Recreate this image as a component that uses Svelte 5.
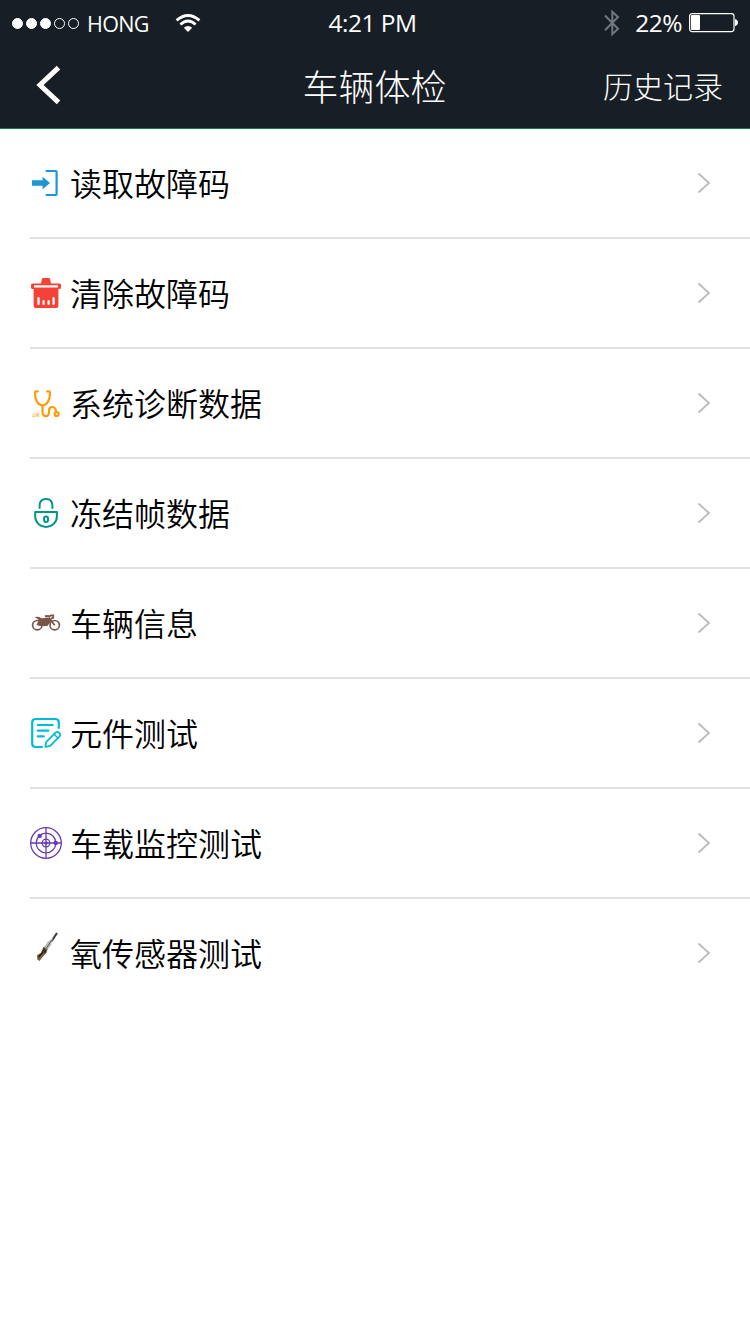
<script lang="ts">
  interface MenuItem {
    icon: string;
    label: string;
  }

  const signal = [true, true, true, false, false];

  const items: MenuItem[] = [
    { icon: 'read', label: '读取故障码' },
    { icon: 'clear', label: '清除故障码' },
    { icon: 'diagnose', label: '系统诊断数据' },
    { icon: 'freeze', label: '冻结帧数据' },
    { icon: 'vehicle', label: '车辆信息' },
    { icon: 'component', label: '元件测试' },
    { icon: 'monitor', label: '车载监控测试' },
    { icon: 'oxygen', label: '氧传感器测试' }
  ];
</script>

<div class="screen">
  <header>
    <div class="status-bar">
      <div class="carrier">
        <div class="signal">
          {#each signal as on}
            <span class="dot" class:on></span>
          {/each}
        </div>
        <span class="carrier-name">HONG</span>
        <svg class="wifi" width="26" height="20" viewBox="0 0 26 20">
          <g fill="none" stroke="#fff" stroke-width="2.8">
            <path d="M1.6 7.4Q13 -2.4 24.4 7.4" />
            <path d="M5.4 11.5Q13 4.6 20.6 11.5" />
          </g>
          <path d="M8.8 14.7Q13 11.2 17.2 14.7L13 19Z" fill="#fff" />
        </svg>
      </div>
      <span class="time">4:21 PM</span>
      <div class="power">
        <svg class="bluetooth" width="16" height="28" viewBox="0 0 16 28">
          <path d="M1 6.5L14 19.8L8.3 25.2V2.8L14 8L1 21.2" fill="none" stroke="#74767e" stroke-width="2" />
        </svg>
        <span class="percent">22%</span>
        <svg class="battery" width="50" height="20" viewBox="0 0 50 20">
          <rect x="0.6" y="0.6" width="44.4" height="18" rx="2.5" fill="none" stroke="#fff" stroke-width="1.2" />
          <rect x="2" y="2" width="9" height="15" rx="1" fill="#fff" />
          <path d="M46 6Q49 7 49 9.6T46 13.2Z" fill="#fff" />
        </svg>
      </div>
    </div>
    <nav>
      <button class="back" aria-label="返回">
        <svg width="26" height="40" viewBox="0 0 26 40">
          <path d="M22.5 2.7L4 20L22.5 37.3" fill="none" stroke="#fff" stroke-width="5" />
        </svg>
      </button>
      <h1>车辆体检</h1>
      <button class="history">历史记录</button>
    </nav>
  </header>

  <ul class="menu">
    {#each items as item}
      <li>
        <svg class="icon" width="32" height="32" viewBox="0 0 32 32">
          {#if item.icon === 'read'}
            <path d="M2 13.2H12.6V9.8L20 16L12.6 22.2V18.8H2Z" fill="#1c96d8" />
            <path d="M15.7 4H25.6Q26.6 4 26.6 4.8V27.2Q26.6 28 25.6 28H15.7" fill="none" stroke="#1c96d8" stroke-width="2.2" />
          {:else if item.icon === 'clear'}
            <path d="M11 6.5L11.8 2.4Q12 1 13.4 1H18.6Q20 1 20.2 2.4L21 6.5H29.5Q31 6.5 31 8V10.5Q31 12 29.5 12H28.4V29Q28.4 31 26.4 31H5.6Q3.6 31 3.6 29V12H2.5Q1 12 1 10.5V8Q1 6.5 2.5 6.5Z" fill="#f44336" />
            <path d="M4 9.4H28" stroke="#fff" stroke-width="2.2" />
            <path d="M8.5 21V27M13.6 24V27M18.6 24V27M23.6 21V27" stroke="#fff" stroke-width="2.2" stroke-linecap="round" />
          {:else if item.icon === 'diagnose'}
            <g fill="none" stroke="#ff9c0a" stroke-width="2.2" stroke-linecap="round">
              <path d="M7.8 4.4H6.2Q5 4.4 5 6C5 11 7 18.3 12.5 18.3S20 11 20 6Q20 4.4 18.8 4.4H17.2" />
              <path d="M12.5 18.5V24.5Q12.5 29.2 15.7 29.2Q19 29.2 19 25V23.5Q19 20 22.3 20T26 24.5" />
              <circle cx="26.6" cy="27" r="2" />
            </g>
            <text x="2" y="29.8" font-size="4" fill="#ff9c0a">诊断</text>
          {:else if item.icon === 'freeze'}
            <g fill="none" stroke="#009688" stroke-width="2">
              <path d="M9.6 11.8V8.5Q9.6 1.9 16 1.9T22.4 8.5V11.8" />
              <path d="M5.2 14.9H26.9V19.5A10.85 10.4 0 0 1 5.2 19.5Z" stroke-linejoin="round" />
              <rect x="14.1" y="19.4" width="3.9" height="5.6" rx="1.9" />
            </g>
          {:else if item.icon === 'vehicle'}
            <g fill="none" stroke="#795548" stroke-width="1.7">
              <circle cx="7.3" cy="18.2" r="4.7" />
              <circle cx="24.7" cy="18.2" r="4.7" />
              <path d="M24.7 18.2L19 10.5M15 9L18.5 9.5M7.3 18.2L10 13" />
            </g>
            <path d="M4.6 10.1Q8.5 9.2 11 11Q14 11.6 16 10.6L19.6 11L21 14.2L17.4 19H9.3L7.6 17.8L9.8 14.2L7.5 11.7Z" fill="#795548" />
            <path d="M15.2 9.2H19.5L21.2 8.4H23.2V10.8L21 11.6" fill="none" stroke="#795548" stroke-width="1.8" />
          {:else if item.icon === 'component'}
            <g fill="none" stroke="#00bcd4" stroke-width="2.2" stroke-linecap="round" stroke-linejoin="round">
              <path d="M28.8 11V5.5Q28.8 2 25.3 2H5.7Q2.2 2 2.2 5.5V26.5Q2.2 30 5.7 30H12" />
              <path d="M7.8 8H22.7M7.8 13.7H18.3M7.8 19.4H13.8" />
              <path d="M15.4 29.8L16.1 25.2L25.5 15.6Q27 14.1 29 15.7Q31.2 17.7 29.4 19.6L20.2 28.8Z" stroke-width="1.8" />
              <path d="M24.2 17.3L27.9 21" stroke-width="1.6" />
            </g>
          {:else if item.icon === 'monitor'}
            <g fill="none" stroke="#673ab7" stroke-width="1.3">
              <circle cx="16" cy="16" r="15.3" />
              <circle cx="16" cy="16" r="9.8" />
              <circle cx="16" cy="16" r="3.8" />
              <circle cx="16" cy="16" r="1" />
              <path d="M0.5 16H31.5M16 0.5V31.5" />
            </g>
            <circle cx="9.7" cy="8.9" r="2.2" fill="#673ab7" />
            <circle cx="25.8" cy="16" r="2.2" fill="#673ab7" />
          {:else}
            <path d="M27 -4L21 5" stroke="#34343a" stroke-width="2" />
            <path d="M22.8 1.2L18 4.6L13.4 11L16.5 14L21 8.2Z" fill="#bcbcb4" />
            <path d="M21.7 3.2L16.5 11" stroke="#5c5b58" stroke-width="1" />
            <path d="M13.4 9.8L17.6 12L16.4 15.7L11.8 21L9.5 24L7.3 22.5L7 18.2L11.3 15.4Z" fill="#76613e" />
            <path d="M14.6 11.5L12.3 15.8L8.5 20.2M16 13L14.3 16" fill="none" stroke="#292519" stroke-width="1.5" />
          {/if}
        </svg>
        <span class="label">{item.label}</span>
        <svg class="chevron" width="14" height="22" viewBox="0 0 14 22">
          <path d="M1.5 1.5L12 11L1.5 20.5" fill="none" stroke="#bbb" stroke-width="1.8" />
        </svg>
      </li>
    {/each}
  </ul>
</div>

<style>
  :global(body) {
    background: #fff;
  }

  .screen {
    width: 750px;
    height: 1334px;
    overflow: hidden;
    background: #fff;
    font-family: 'Noto Sans CJK SC', sans-serif;
  }

  header {
    box-sizing: border-box;
    height: 129px;
    border-bottom: 1px solid #0a8043;
    background: #171e25;
    color: #fff;
  }

  .status-bar,
  nav {
    display: grid;
    grid-template-columns: 1fr auto 1fr;
    align-items: center;
  }

  .status-bar {
    height: 46px;
    padding: 0 12px;
    font-family: 'Open Sans', 'Noto Sans', sans-serif;
    font-weight: 400;
  }

  .carrier,
  .power,
  .signal {
    display: flex;
    align-items: center;
  }

  .signal {
    gap: 3px;
  }

  .dot {
    box-sizing: border-box;
    width: 11px;
    height: 11px;
    border: 1px solid #fff;
    border-radius: 50%;
  }

  .dot.on {
    background: #fff;
  }

  .carrier-name {
    width: 62px;
    margin-left: 8px;
    padding-top: 1px;
    font-size: 21.5px;
    letter-spacing: -0.7px;
    line-height: 45px;
  }

  .wifi {
    margin-left: 26px;
  }

  .time {
    margin-right: 5px;
    padding-bottom: 1px;
    font-size: 24.5px;
    letter-spacing: -0.5px;
  }

  .power {
    justify-content: flex-end;
  }

  .bluetooth {
    margin-bottom: 1px;
  }

  .percent {
    margin: 0 7px 0 15px;
    padding-bottom: 1px;
    font-size: 24.5px;
    letter-spacing: -0.5px;
  }

  .battery {
    margin-right: -1px;
  }

  nav {
    height: 78px;
    padding: 0 27px 0 36px;
  }

  button {
    padding: 0;
    border: 0;
    background: none;
    color: inherit;
    font-family: inherit;
  }

  .back {
    display: flex;
  }

  h1 {
    margin: 0 10px 0 0;
    font-size: 36px;
    font-weight: 300;
  }

  .history {
    justify-self: end;
    font-size: 30px;
    font-weight: 300;
  }

  .menu {
    margin: 0;
    padding: 0 0 0 30px;
    list-style: none;
  }

  li {
    box-sizing: border-box;
    display: flex;
    align-items: center;
    height: 110px;
    padding-right: 39px;
    border-bottom: 2px solid #e1e1e1;
  }

  li:last-child {
    border-bottom-color: transparent;
  }

  .icon {
    overflow: visible;
  }

  .label {
    flex: 1;
    margin-left: 8px;
    padding-bottom: 2px;
    color: #000;
    font-size: 32px;
    font-weight: 350;
  }
</style>
